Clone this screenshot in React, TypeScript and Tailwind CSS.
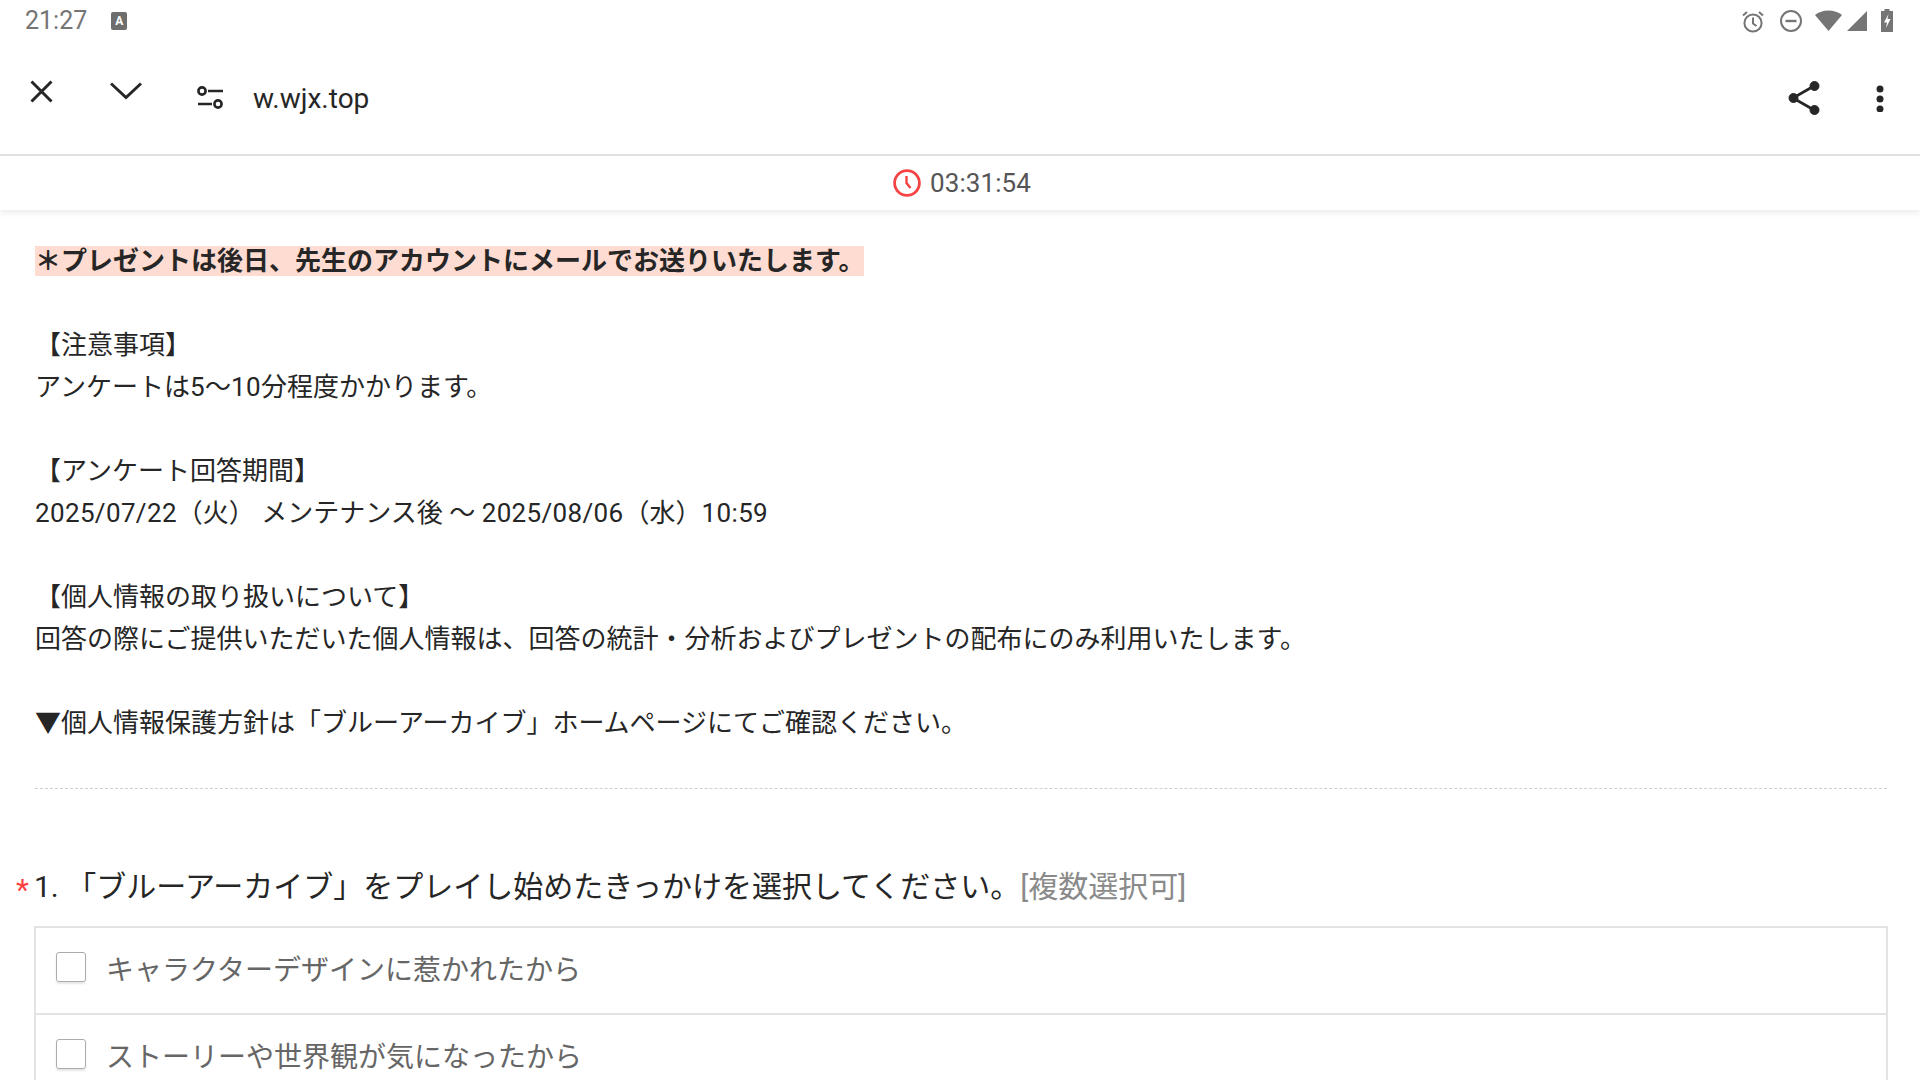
const font = { fontFamily: 'Roboto, "Noto Sans CJK JP", sans-serif' }

function StatusIcons() {
  return (
    <div className="flex items-center text-[#757575]">
      <svg width="22" height="23" viewBox="0 0 22 23" fill="none" stroke="currentColor" strokeWidth="2">
        <circle cx="11" cy="13" r="8.6" />
        <path d="M11 7.5v6l3.5 2.5M1 5.5l4-3.5M21 5.5l-4-3.5" />
      </svg>
      <svg className="ml-[16px]" width="22" height="22" viewBox="0 0 22 22" fill="none" stroke="currentColor" strokeWidth="2">
        <circle cx="11" cy="11" r="10" />
        <path d="M5.5 11h11" strokeWidth="2.4" />
      </svg>
      <svg className="ml-[13px]" width="27" height="22" viewBox="0 0 27 22" fill="currentColor">
        <path d="M0 5C7 -1 20 -1 27 5L13.5 21Z" />
      </svg>
      <svg className="ml-[5px]" width="20" height="20" viewBox="0 0 20 20" fill="currentColor">
        <path d="M20 0V20H0Z" />
      </svg>
      <svg className="ml-[14px] -mt-[2px]" width="12" height="23" viewBox="0 0 12 23">
        <path d="M3.5 0h5v2H12v21H0V2h3.5Z" fill="currentColor" />
        <path d="M7.5 5L3 13.5h3l-1 5.5 4.5-9h-3Z" fill="#fff" />
      </svg>
    </div>
  )
}

function Option({ label }: { label: string }) {
  return (
    <div className="flex h-[87px] items-start border-b-2 border-[#e3e3e3] pl-[20px]">
      <span className="mt-[24px] h-[30px] w-[30px] shrink-0 rounded-[3px] border-[1.5px] border-[#ababab] shadow-[0_2px_2px_rgba(0,0,0,0.1)]" />
      <span className="ml-[20px] mt-[22px] text-[28px] leading-[42px] text-[#666]">{label}</span>
    </div>
  )
}

export default function App() {
  return (
    <div className="h-[1080px] w-[1920px] overflow-hidden bg-white text-[#262626]" style={font}>
      {/* Status bar */}
      <div className="flex h-[44px] items-center justify-between pb-[2px] pl-[25px] pr-[27px]">
        <div className="flex items-center gap-[24px]">
          <span className="text-[25px] text-[#757575]">21:27</span>
          <span className="flex h-[18px] w-[16px] items-center justify-center rounded-[2px] bg-[#6e6e6e] text-[12px] font-bold leading-none text-white">A</span>
        </div>
        <StatusIcons />
      </div>

      {/* Browser toolbar */}
      <div className="flex h-[112px] items-start border-b-2 border-[#e2e2e2] bg-white">
        <svg className="ml-[30px] mt-[36px]" width="23" height="23" viewBox="0 0 23 23" fill="none" stroke="currentColor" strokeWidth="3">
          <path d="M1.5 1.5l20 20M21.5 1.5l-20 20" />
        </svg>
        <svg className="ml-[57px] mt-[38px]" width="32" height="18" viewBox="0 0 32 18" fill="none" stroke="currentColor" strokeWidth="3">
          <path d="M1 1.5l15 14 15-14" />
        </svg>
        <svg className="ml-[55px] mt-[42px]" width="27" height="23" viewBox="0 0 27 23" fill="none" stroke="currentColor" strokeWidth="2.6">
          <circle cx="5" cy="5" r="3.6" />
          <path d="M11 5h15M1 18h14" />
          <circle cx="21" cy="18" r="3.6" />
        </svg>
        <span className="ml-[29px] mt-[37px] text-[28px] leading-[36px]">w.wjx.top</span>
        <div className="ml-auto flex items-start pr-[36px] pt-[36px]">
          <svg width="33" height="36" viewBox="0 0 33 36" fill="currentColor" stroke="currentColor">
            <path d="M5 18L26 6M5 18l21 12" fill="none" strokeWidth="2.6" />
            <circle cx="5.5" cy="18" r="4.5" strokeWidth="1" />
            <circle cx="26.5" cy="6" r="4.5" strokeWidth="1" />
            <circle cx="26.5" cy="30" r="4.5" strokeWidth="1" />
          </svg>
          <svg className="ml-[55px] mt-[5px]" width="8" height="27" viewBox="0 0 8 27" fill="currentColor">
            <circle cx="4" cy="4" r="3.5" />
            <circle cx="4" cy="14" r="3.5" />
            <circle cx="4" cy="24" r="3.5" />
          </svg>
        </div>
      </div>

      {/* Countdown */}
      <div className="relative flex h-[54px] items-center justify-center gap-[9px] bg-white pl-[4px] shadow-[0_3px_6px_rgba(0,0,0,0.08)]">
        <svg width="28" height="28" viewBox="0 0 28 28" fill="none" stroke="#f44444" strokeWidth="2.8">
          <circle cx="14" cy="14" r="12.4" />
          <path d="M13.5 7v7l4 5" strokeWidth="2.4" />
        </svg>
        <span className="text-[26px] tracking-[0.1px] text-[#555]">03:31:54</span>
      </div>

      {/* Survey body */}
      <div className="pl-[35px] pr-[33px] pt-[30px]">
        <div className="text-[26px] leading-[42px]">
          <p>
            <span className="bg-[#ffdcd2] font-bold">＊プレゼントは後日、先生のアカウントにメールでお送りいたします。</span>
          </p>
          <p className="mt-[42px]">【注意事項】</p>
          <p>アンケートは<span className="tracking-[0.35px]">5</span>～<span className="tracking-[0.35px]">10</span>分程度かかります。</p>
          <p className="mt-[42px]">【アンケート回答期間】</p>
          <p>
            <span className="tracking-[0.35px]">2025/07/22</span>（火） メンテナンス後 ～ <span className="tracking-[0.35px]">2025/08/06</span>（水）<span className="tracking-[0.35px]">10:59</span>
          </p>
          <p className="mt-[42px]">【個人情報の取り扱いについて】</p>
          <p>回答の際にご提供いただいた個人情報は、回答の統計・分析およびプレゼントの配布にのみ利用いたします。</p>
          <p className="mt-[42px]">▼個人情報保護方針は「ブルーアーカイブ」ホームページにてご確認ください。</p>
        </div>

        <div className="mt-[44px] border-t border-dashed border-[#cfcfcf]" />

        <div className="relative -ml-[1px] mt-[77px] text-[30px] leading-[42px]">
          <span className="absolute -left-[18px] top-[3px] text-[#ff4040]">*</span>
          1. 「ブルーアーカイブ」をプレイし始めたきっかけを選択してください。
          <span className="text-[#8a8a8a]">[複数選択可]</span>
        </div>

        <div className="-mx-[1px] mt-[18px] border-x-2 border-t-2 border-[#e3e3e3]">
          <Option label="キャラクターデザインに惹かれたから" />
          <Option label="ストーリーや世界観が気になったから" />
        </div>
      </div>
    </div>
  )
}
